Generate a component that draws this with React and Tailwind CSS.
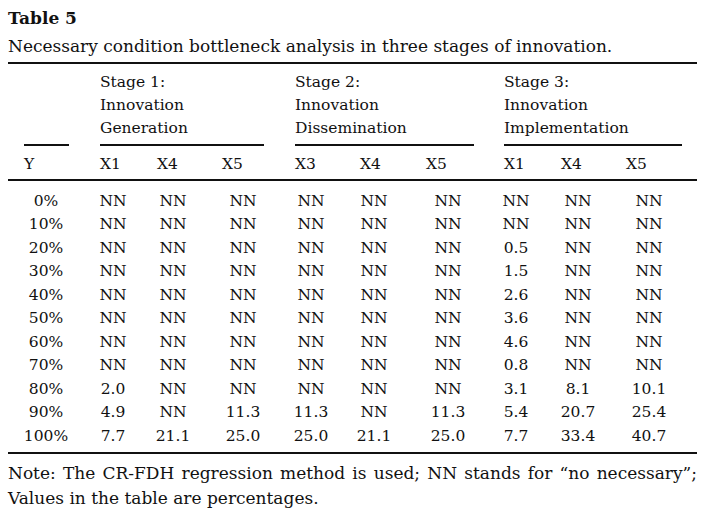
const rows = [
  ['0%', 'NN', 'NN', 'NN', 'NN', 'NN', 'NN', 'NN', 'NN', 'NN'],
  ['10%', 'NN', 'NN', 'NN', 'NN', 'NN', 'NN', 'NN', 'NN', 'NN'],
  ['20%', 'NN', 'NN', 'NN', 'NN', 'NN', 'NN', '0.5', 'NN', 'NN'],
  ['30%', 'NN', 'NN', 'NN', 'NN', 'NN', 'NN', '1.5', 'NN', 'NN'],
  ['40%', 'NN', 'NN', 'NN', 'NN', 'NN', 'NN', '2.6', 'NN', 'NN'],
  ['50%', 'NN', 'NN', 'NN', 'NN', 'NN', 'NN', '3.6', 'NN', 'NN'],
  ['60%', 'NN', 'NN', 'NN', 'NN', 'NN', 'NN', '4.6', 'NN', 'NN'],
  ['70%', 'NN', 'NN', 'NN', 'NN', 'NN', 'NN', '0.8', 'NN', 'NN'],
  ['80%', '2.0', 'NN', 'NN', 'NN', 'NN', 'NN', '3.1', '8.1', '10.1'],
  ['90%', '4.9', 'NN', '11.3', '11.3', 'NN', '11.3', '5.4', '20.7', '25.4'],
  ['100%', '7.7', '21.1', '25.0', '25.0', '21.1', '25.0', '7.7', '33.4', '40.7'],
];

// centre of each data column, measured from the column's left edge
const cellPos = [
  'ml-[22px]',
  'ml-[13px]',
  'ml-[16px]',
  'ml-[21px]',
  'ml-[16px]',
  'ml-[14px]',
  'ml-[22px]',
  'ml-[12px]',
  'ml-[17px]',
  'ml-[23px]',
];

const labels = ['Y', 'X1', 'X4', 'X5', 'X3', 'X4', 'X5', 'X1', 'X4', 'X5'];

const gridCols =
  'grid grid-cols-[76px_57px_65px_73px_65px_66px_78px_57px_65px_55px] pl-[16px]';

function StageHead({ lines, span, rule }) {
  return (
    <div className={span}>
      <div className="pt-[7px] text-[15.5px] leading-[23px]">
        {lines.map((l) => (
          <div key={l}>{l}</div>
        ))}
      </div>
      <div className={`mt-[4px] h-[2px] bg-[#111] ${rule}`} />
    </div>
  );
}

export default function App() {
  return (
    <div className="w-[708px] h-[519px] bg-white pl-[8px] pr-[11px] text-[#111] font-['DejaVu_Serif',serif]">
      {/* Caption */}
      <h2 className="pt-[6px] text-[17px] font-bold leading-[24px]">Table 5</h2>
      <p className="mt-[4px] text-[17px] leading-[24px]">
        Necessary condition bottleneck analysis in three stages of innovation.
      </p>

      <div className="mt-[4px] h-[2px] bg-[#111]" />

      {/* Stage headers */}
      <div className={gridCols}>
        <div className="flex flex-col justify-end">
          <div className="h-[2px] w-[45px] bg-[#111]" />
        </div>
        <StageHead
          span="col-span-3"
          rule="w-[164px]"
          lines={['Stage 1:', 'Innovation', 'Generation']}
        />
        <StageHead
          span="col-span-3"
          rule="w-[179px]"
          lines={['Stage 2:', 'Innovation', 'Dissemination']}
        />
        <StageHead
          span="col-span-3"
          rule="w-[178px]"
          lines={['Stage 3:', 'Innovation', 'Implementation']}
        />
      </div>

      {/* Column labels */}
      <div className={`${gridCols} pt-[7px] pb-[3px] text-[15.5px] leading-[23px]`}>
        {labels.map((l, i) => (
          <div key={i}>{l}</div>
        ))}
      </div>

      <div className="h-[2px] bg-[#111]" />

      {/* Body */}
      <div className="pt-[8.5px] pb-[4px] text-[15.5px]">
        {rows.map((r) => (
          <div key={r[0]} className={`${gridCols} h-[23.5px] items-center`}>
            {r.map((v, i) => (
              <div key={i} className={`flex w-0 justify-center whitespace-nowrap ${cellPos[i]}`}>
                {v}
              </div>
            ))}
          </div>
        ))}
      </div>

      <div className="h-[2px] bg-[#111]" />

      {/* Note */}
      <div className="mt-[7px] text-[17px] leading-[24.5px]">
        <p className="text-justify [text-align-last:justify]">
          Note: The CR-FDH regression method is used; NN stands for “no necessary”;
        </p>
        <p>Values in the table are percentages.</p>
      </div>
    </div>
  );
}
